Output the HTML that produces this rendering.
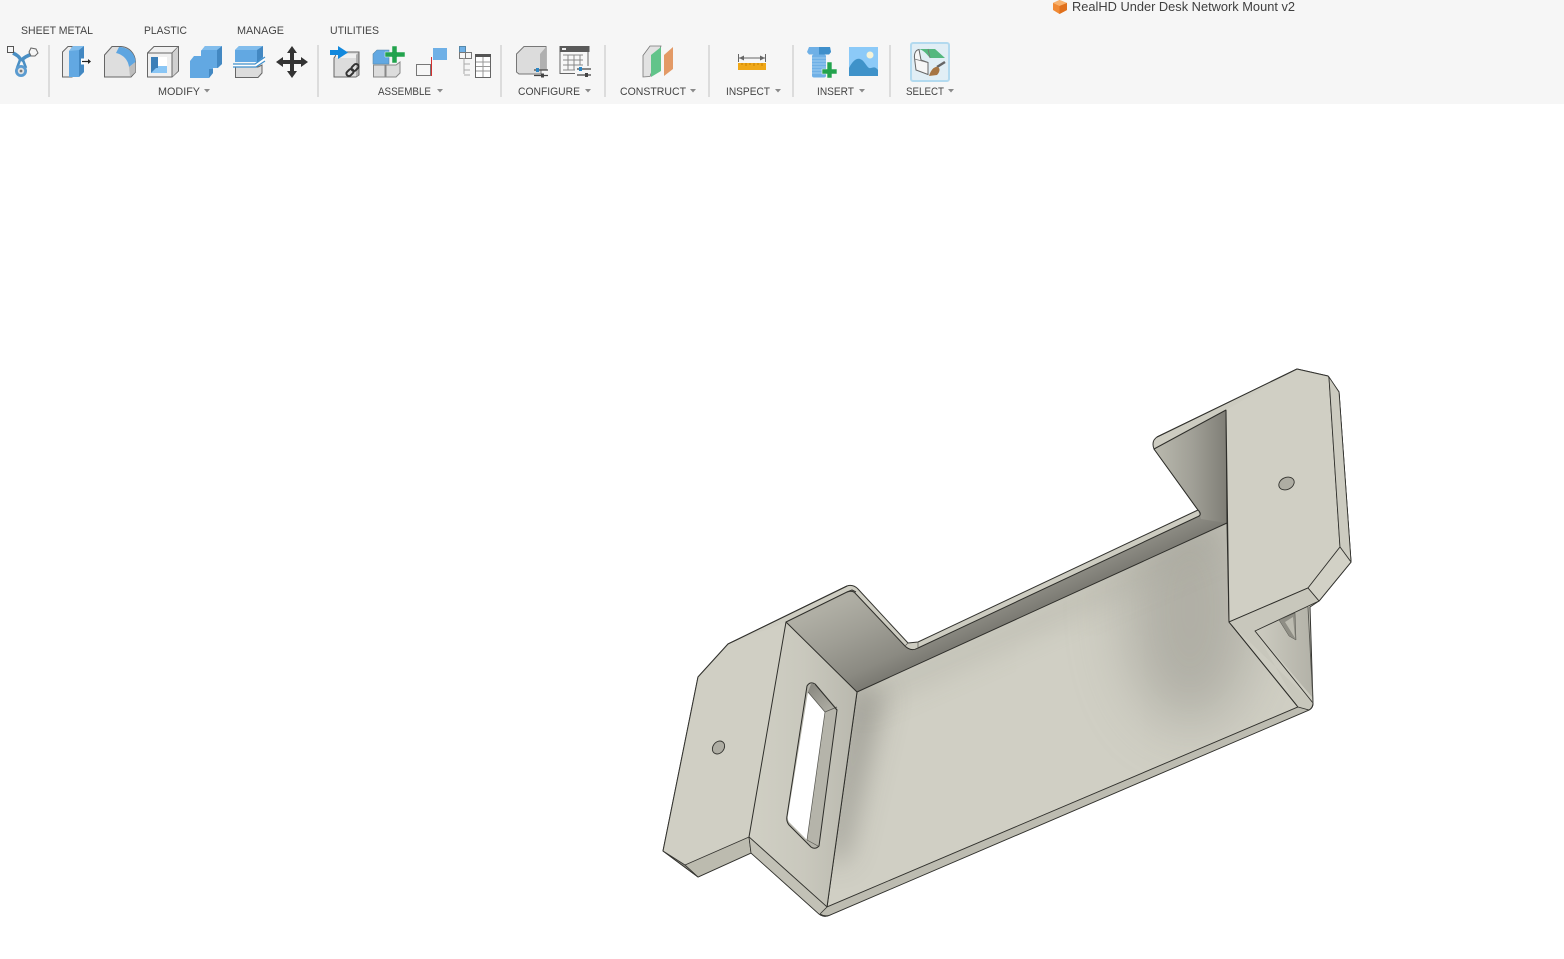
<!DOCTYPE html>
<html><head><meta charset="utf-8"><title>RealHD Under Desk Network Mount v2</title>
<style>html,body{margin:0;padding:0;background:#fff;width:1564px;height:959px;overflow:hidden}svg{display:block}
text{font-family:"Liberation Sans",Arial,sans-serif;font-size:11px;fill:#444}</style></head>
<body>
<svg width="1564" height="959" viewBox="0 0 1564 959" xmlns="http://www.w3.org/2000/svg">
<defs>
<linearGradient id="wall" gradientUnits="userSpaceOnUse" x1="857" y1="692" x2="820" y2="610">
<stop offset="0" stop-color="#7a7972"/><stop offset=".2" stop-color="#8b8a82"/><stop offset=".6" stop-color="#9f9e95"/><stop offset="1" stop-color="#b0afa5"/>
</linearGradient>
<linearGradient id="wallR" gradientUnits="userSpaceOnUse" x1="1150" y1="0" x2="1228" y2="0">
<stop offset="0" stop-color="#bdbcb1"/><stop offset=".55" stop-color="#a09f96"/><stop offset="1" stop-color="#7e7d75"/>
</linearGradient>
<linearGradient id="face" gradientUnits="userSpaceOnUse" x1="750" y1="0" x2="858" y2="0">
<stop offset="0" stop-color="#d0cfc4"/><stop offset=".5" stop-color="#c9c8bd"/><stop offset="1" stop-color="#b9b8ae"/>
</linearGradient>
<linearGradient id="rear" gradientUnits="userSpaceOnUse" x1="1250" y1="0" x2="1312" y2="0">
<stop offset="0" stop-color="#cfcec3"/><stop offset="1" stop-color="#b3b2a8"/>
</linearGradient>
<linearGradient id="slottop" gradientUnits="userSpaceOnUse" x1="808" y1="688" x2="832" y2="720">
<stop offset="0" stop-color="#8a8981"/><stop offset="1" stop-color="#b8b7ad"/>
</linearGradient>
<filter id="b14" filterUnits="userSpaceOnUse" x="600" y="350" width="900" height="650"><feGaussianBlur stdDeviation="14"/></filter>
<filter id="b30" filterUnits="userSpaceOnUse" x="600" y="350" width="900" height="650"><feGaussianBlur stdDeviation="30"/></filter>
<clipPath id="floorclip"><path d="M857 692L1227 523L1229 622L1298 707L827 907Z"/></clipPath>
</defs>

<rect width="1564" height="104" fill="#f6f6f6"/>

<!-- title -->
<path d="M1059.500 0L1067 3V10L1059.500 14L1053 10V3Z" fill="#f08a35"/><path d="M1053 3L1059.500 6L1067 3L1059.500 0Z" fill="#f8b26e"/><path d="M1059.500 6V14L1067 10V3Z" fill="#e0701c"/>
<text x="1072" y="11" textLength="223" lengthAdjust="spacingAndGlyphs" style="font-size:12.500px;fill:#3f3f3f">RealHD Under Desk Network Mount v2</text>

<!-- tabs -->
<text x="21" y="34" textLength="72" lengthAdjust="spacingAndGlyphs">SHEET METAL</text>
<text x="144" y="34" textLength="43" lengthAdjust="spacingAndGlyphs">PLASTIC</text>
<text x="237" y="34" textLength="47" lengthAdjust="spacingAndGlyphs">MANAGE</text>
<text x="330" y="34" textLength="49" lengthAdjust="spacingAndGlyphs">UTILITIES</text>

<!-- group labels -->
<text x="158" y="95" textLength="42" lengthAdjust="spacingAndGlyphs">MODIFY</text>
<text x="378" y="95" textLength="53" lengthAdjust="spacingAndGlyphs">ASSEMBLE</text>
<text x="518" y="95" textLength="62" lengthAdjust="spacingAndGlyphs">CONFIGURE</text>
<text x="620" y="95" textLength="66" lengthAdjust="spacingAndGlyphs">CONSTRUCT</text>
<text x="726" y="95" textLength="44" lengthAdjust="spacingAndGlyphs">INSPECT</text>
<text x="817" y="95" textLength="37" lengthAdjust="spacingAndGlyphs">INSERT</text>
<text x="906" y="95" textLength="38" lengthAdjust="spacingAndGlyphs">SELECT</text>
<g fill="#8a8a8a">
<path d="M204 89h6l-3 3.500z"/><path d="M437 89h6l-3 3.500z"/><path d="M585 89h6l-3 3.500z"/><path d="M690 89h6l-3 3.500z"/><path d="M775 89h6l-3 3.500z"/><path d="M859 89h6l-3 3.500z"/><path d="M948 89h6l-3 3.500z"/>
</g>

<!-- separators -->
<g fill="#dcdcdc">
<rect x="48" y="45" width="2" height="52"/><rect x="317" y="45" width="2" height="52"/><rect x="500" y="45" width="2" height="52"/><rect x="604" y="45" width="2" height="52"/><rect x="708" y="45" width="2" height="52"/><rect x="792" y="45" width="2" height="52"/><rect x="889" y="45" width="2" height="52"/>
</g>

<!-- Sheet metal icon -->
<g>
<path d="M13 53C17 55 20 57 21 61M33 54C28 55 23 58 21 61" fill="none" stroke="#4a8fc4" stroke-width="3.500"/>
<path d="M20 60L17 68M23 60L26 68" fill="none" stroke="#4a8fc4" stroke-width="2.500"/>
<circle cx="21" cy="71" r="6" fill="#5a9bd0"/><circle cx="21" cy="71" r="3.200" fill="#e2e2e2"/><circle cx="21" cy="71" r="1.400" fill="#777"/>
<rect x="7.500" y="46.500" width="6" height="6" fill="#f6f6f6" stroke="#555"/>
<path d="M31 48L36 49L38 53L35 56L31 56L29 52Z" fill="#f6f6f6" stroke="#666"/>
</g>

<!-- Press pull -->
<path d="M62.500 77V52L68 46.500H72V77Z" fill="#ececec" stroke="#666"/>
<path d="M69 51L73 46H84V72L79 77H69Z" fill="#62a8e2"/><path d="M79 50V77L84 72V46Z" fill="#4388c2"/><path d="M69 51L73 46H84L79 50Z" fill="#82bdec"/>
<rect x="81" y="58.500" width="4" height="6" fill="#fff"/>
<path d="M82 61.500H89" stroke="#222" stroke-width="1.200"/><path d="M88 59L91 61.500L88 64Z" fill="#222"/>

<!-- Fillet -->
<path d="M104.500 77V55L112 46.500H121C129 47 135 53 135.500 62V72L131 77Z" fill="#dedede" stroke="#666"/>
<path d="M119 47C128 47 135 53 135.500 62L129 67C128 60 124 55 116 53Z" fill="#5ea5e0"/>
<path d="M129 67L135.500 62V72L130 77Z" fill="#bdbdbd"/>

<!-- Shell -->
<path d="M147.500 77V53L154 46.500H178.500V71L172 77Z" fill="#f0f0f0" stroke="#666"/>
<path d="M147.500 53H172V77M172 53L178.500 46.500" fill="none" stroke="#666"/>
<path d="M172.500 53L178 47V71L172.500 76.500Z" fill="#d0d0d0"/>
<rect x="151" y="57" width="16" height="16" fill="#fff"/>
<path d="M151 58H158V68H167V73H151Z" fill="#3b7fb8"/><path d="M158 66H167V73H151Z" fill="#8ac6f5"/><rect x="151" y="57" width="7" height="11" fill="#3b7fb8"/>

<!-- Combine -->
<path d="M190 61L194 56H201V51L205 46H222V64L218 68H213V73L209 78H190Z" fill="#62a8e2"/>
<path d="M217 50L222 46V64L217 68ZM209 69H213V73L209 78Z" fill="#4388c2"/>
<path d="M201 51L205 46H222L217 50H201Z" fill="#82bdec"/>

<!-- Split -->
<path d="M235 50L239 46H263V58L259 62H235Z" fill="#62a8e2"/><path d="M235 50L239 46H263L258 50H235Z" fill="#82bdec"/><path d="M257 50L263 46V57L257 62Z" fill="#4388c2"/>
<path d="M235.500 67H258L262 65V73L258 77.500H235.500Z" fill="#dcdcdc" stroke="#666"/>
<path d="M233 65.500H255C258 65.500 261 61 265 59" fill="none" stroke="#fff" stroke-width="3"/>
<path d="M233 64H255L265 57M233 67H256L265 61" fill="none" stroke="#3f8fcb" stroke-width="1.200"/>

<!-- Move -->
<path d="M292 46L297 53H294V60H301V57L308 62L301 67V64H294V71H297L292 78L287 71H290V64H283V67L276 62L283 57V60H290V53H287Z" fill="#333"/>

<!-- Joint origin -->
<path d="M334 58L338 52H359V75L356 77H334Z" fill="#dcdcdc" stroke="#666"/>
<path d="M336 54H356V58H336Z" fill="#efefef"/><path d="M356 55L358.500 52.500V75L356 76.500Z" fill="#b0b0b0"/>
<rect x="330" y="50" width="10" height="5" fill="#1188dd"/><path d="M338 46L348 52.500L338 59Z" fill="#1188dd"/>
<g fill="none" stroke="#333" stroke-width="2"><rect x="346" y="70" width="8" height="5" rx="2.500" transform="rotate(-45 350 72.500)"/><rect x="351" y="65" width="8" height="5" rx="2.500" transform="rotate(-45 355 67.500)"/></g>

<!-- New component -->
<path d="M373 54L377 50H389V64H373Z" fill="#62a8e2" stroke="#5588aa" stroke-width=".6"/>
<path d="M373.500 65H385V77H373.500Z" fill="#dcdcdc" stroke="#888"/><path d="M386 65H396L400 62V73L396 77H386Z" fill="#dcdcdc" stroke="#888"/>
<path d="M392 46H397V52H405V57H397V63H392V57H385V52H392Z" fill="#22a34d" stroke="#f6f6f6" stroke-width=".5"/>

<!-- Align -->
<rect x="416.500" y="64.500" width="14" height="11" fill="none" stroke="#777"/><rect x="433" y="48" width="14" height="12" fill="#6fb0e6"/>
<path d="M431.500 57V76" stroke="#d63030" stroke-width="1"/>

<!-- Tree / table -->
<rect x="459.500" y="46.500" width="6" height="6" fill="#6fb0e6" stroke="#5588aa"/><rect x="459.500" y="52.500" width="6" height="6" fill="#f6f6f6" stroke="#777"/><rect x="465.500" y="52.500" width="6" height="6" fill="#f6f6f6" stroke="#777"/>
<path d="M464 58V74M464 64H470M464 70H470M464 75H470" fill="none" stroke="#aaa"/>
<rect x="475.500" y="55.500" width="15" height="22" fill="#fff" stroke="#666"/><rect x="475" y="54" width="16" height="3" fill="#555"/>
<path d="M476 62H490M476 66.500H490M476 71H490M483 57V77" stroke="#999" fill="none"/>

<!-- Configure -->
<path d="M516.500 72V54L524 46.500H546V70H541V74H519Z" fill="#dcdcdc" stroke="#777"/>
<path d="M540 54L546 47V70H540Z" fill="#b0b0b0"/>
<path d="M534 70H548M534 75.500H548" stroke="#444" stroke-width="1.300"/><rect x="536" y="68" width="3" height="4" fill="#2b86c5"/><rect x="541" y="73.500" width="3" height="4" fill="#444"/>

<!-- Config table -->
<rect x="560" y="46.500" width="28" height="27" fill="#f7f7f7" stroke="#666"/><rect x="559.500" y="46" width="30" height="6" fill="#5a5a5a"/><rect x="562" y="48" width="4" height="2" fill="#eee"/>
<path d="M563 55H583M563 60H583M563 65H583M563 70H578M568 55V70M574 55V70M580 55V65" stroke="#888" fill="none"/>
<rect x="575" y="66" width="16" height="12" fill="#f6f6f6"/>
<path d="M577 69H591M577 75H591" stroke="#444" stroke-width="1.300"/><rect x="579" y="67" width="3" height="4" fill="#2b86c5"/><rect x="585" y="73" width="3" height="4" fill="#444"/>

<!-- Construct -->
<path d="M643 55.500V77L650 76.500L661 46H650Z" fill="#e2e2e2" stroke="#777" stroke-width=".8"/>
<path d="M651 55L661 47V71L651 77Z" fill="#62c48a"/>
<path d="M664 55L673 47V69L664 76Z" fill="#e39a66"/>

<!-- Inspect -->
<path d="M738.500 54V62M765.500 54V62M739 58H765" stroke="#666" fill="none"/><path d="M739 58L744 55.500V60.500ZM765 58L760 55.500V60.500Z" fill="#666"/>
<rect x="738" y="63" width="28" height="7" fill="#f0a818"/>
<path d="M742 63V65M746 63V66M750 63V65M754 63V66M758 63V65M762 63V66" stroke="#c77f00"/>

<!-- Insert bolt -->
<path d="M807 52L809 47H830L831 52L829 54.500H809Z" fill="#6fb0e6"/><path d="M819 47H830L831 52L829 54.500H819Z" fill="#3f8fcb"/>
<rect x="812" y="54.500" width="14" height="23" rx="2" fill="#6fb0e6"/>
<path d="M812 58H826M812 61H826M812 64H826M812 67H826M812 70H826M812 73H826" stroke="#9ccbf0"/>
<path d="M827 62H832V69H837V74H832V78H827V74H822V69H827Z" fill="#22a34d" stroke="#f6f6f6" stroke-width=".6"/>

<!-- Insert image -->
<rect x="849" y="47" width="29" height="29" fill="#8ccaf8"/>
<path d="M849 76V68C853 60 857 58 860 59C864 60 866 66 869 68C872 69 874 65 878 70V76Z" fill="#3f92c9"/>
<circle cx="870" cy="55" r="3.500" fill="#f5f3d8"/>

<!-- Select -->
<rect x="911" y="43" width="38" height="38" rx="2" fill="#e1eef5" stroke="#b3daef" stroke-width="2"/>
<path d="M914.500 58C914 53 916 50 919 49.500L921 60L928 62.500V74.500L916 70Z" fill="#f6f6f6" stroke="#666"/>
<path d="M919 49H935L945 58H930C926 53 923 50 919 49Z" fill="#55b87f"/>
<path d="M928 49L930 58M914.500 59L927.500 62.500" stroke="#777" fill="none" stroke-width=".8"/>
<path d="M937 67L945 62" stroke="#666" stroke-width="2.500"/><path d="M929 76C931 69 935 66 938 67C941 69 939 73 937 75Z" fill="#a67543"/>

<!-- ===== 3D MODEL ===== -->
<g stroke-linejoin="round">
<!-- silhouette base -->
<path d="M663 851L698 677L728 644L847 586Q853 584 858 589L908 643L918 642L1198 510L1154 449Q1151 441 1157 437L1297 369L1328 376L1339 392L1351 562L1319 601L1310 607L1313 703Q1313 708 1309 710L830 915Q824 918 819 914L751 853L698 877Z" fill="#cdccc1" stroke="#33332f" stroke-width="1"/>

<!-- wall (left flange + long band) -->
<path d="M786 622L847 592Q852 590 855 593L905 646Q911 652 918 648L1197 517Q1203 515 1198 510L1154 449L1226 410L1227 523L857 692Z" fill="url(#wall)"/>
<path d="M1154 449L1226 410L1227 523L1201 519L1198 510Z" fill="url(#wallR)"/>
<path d="M786 622L847 592Q852 590 855 593L905 646Q911 652 918 648L1197 517Q1203 515 1198 510L1154 449L1226 410L1227 523" fill="none" stroke="#2e2e2a" stroke-width="1"/>
<path d="M908 643L905 646M918 642L918 648" fill="none" stroke="#55554f" stroke-width=".7"/>

<!-- floor -->
<path d="M857 692L1227 523L1229 622L1298 707L827 907Z" fill="#d0cfc4"/>
<g clip-path="url(#floorclip)">
<path d="M850 680L885 690L845 860L825 860Z" fill="#8f8e86" opacity=".7" filter="url(#b14)"/>
<ellipse cx="1190" cy="610" rx="62" ry="115" fill="#8f8e86" opacity=".5" filter="url(#b30)"/>
<path d="M857 692L1227 523L1227 545L857 710Z" fill="#a5a49a" opacity=".45" filter="url(#b14)"/>
</g>
<path d="M857 692L1227 523L1229 622L1298 707L827 907Z" fill="none" stroke="#2e2e2a" stroke-width="1"/>

<!-- left outer tab -->
<path d="M663 851L698 677L728 644L786 622L749 837L685 865Z" fill="#d0cfc4"/>
<path d="M698 677L728 644L847 586" fill="none" stroke="#33332f"/>
<path d="M663 851L698 677" fill="none" stroke="#33332f"/>
<!-- face with slot -->
<path d="M786 622L857 692L827 907L749 837Z" fill="url(#face)" stroke="#2e2e2a" stroke-width="1"/>
<!-- slot -->
<path d="M807 686Q810 681 815 684L837 710L819 846Q815 850 811 847L789 825Q786 821 787 816Z" fill="#b5b4aa" stroke="#2e2e2a" stroke-width="1"/>
<path d="M808 692L811 684L815 684L837 708L825 712Z" fill="url(#slottop)"/>
<path d="M808 692L825 712L807 840L789 822Q787 819 788 815Z" fill="#fff"/>
<path d="M808 692L825 712L807 840" fill="none" stroke="#55554f" stroke-width=".7"/>
<path d="M825 712L837 707M807 840L818 846" fill="none" stroke="#55554f" stroke-width=".7"/>
<path d="M815 684L837 710" fill="none" stroke="#2e2e2a"/>
<!-- screw hole -->
<ellipse cx="718.500" cy="747.500" rx="5.500" ry="7" transform="rotate(38 718.500 747.500)" fill="#aeada3" stroke="#33332f" stroke-width=".9"/>
<!-- lower edges -->
<path d="M685 865L749 837L751 853L698 877Z" fill="#bcbbaf" stroke="#33332f" stroke-width=".8"/>
<path d="M663 851L685 865L698 877Z" fill="#8c8b83" stroke="#33332f" stroke-width=".8"/>
<path d="M749 837L827 907L830 915Q824 918 819 914L751 853Z" fill="#c2c1b6" stroke="#33332f" stroke-width=".8"/>
<path d="M827 907L1298 707L1313 703Q1313 708 1309 710L830 915Q825 917 820 914Z" fill="#bdbcb1" stroke="#33332f" stroke-width=".8"/>
<path d="M847 592L852 590L856 592" fill="none" stroke="#33332f"/>

<!-- right tab -->
<path d="M1226 410L1297 369L1328 376L1340 547L1308 588L1229 622Z" fill="#d0cfc4"/>
<path d="M1157 437L1297 369L1328 376L1339 392L1351 562L1319 601" fill="none" stroke="#33332f"/>
<path d="M1226 410L1229 622L1308 588L1340 547L1329 377" fill="none" stroke="#2e2e2a"/>
<path d="M1329 377L1339 392L1351 562L1340 547Z" fill="#cccbc0" stroke="#33332f" stroke-width=".8"/>
<path d="M1308 588L1340 547L1351 562L1319 601Z" fill="#d2d1c6" stroke="#33332f" stroke-width=".8"/>
<path d="M1229 622L1308 588L1319 601L1255 630L1298 707L1309 710L1313 703Z" fill="#c8c7bc"/>
<path d="M1255 630L1308 606L1312 697Z" fill="url(#rear)"/>
<path d="M1229 622L1308 588L1319 601L1255 631L1313 703Q1313 708 1309 710L1298 707L1229 622" fill="none" stroke="#2e2e2a" stroke-width=".9"/>
<path d="M1308 607L1313 703" fill="none" stroke="#55554f" stroke-width=".9"/>
<path d="M1279 620L1295 613L1296 640L1289 636Z" fill="#8f8e85" stroke="#55554f" stroke-width=".5"/>
<path d="M1285 622L1293 617L1295 638Z" fill="#bdbcb1"/>
<ellipse cx="1286.500" cy="483.500" rx="8" ry="6" transform="rotate(-25 1286.500 483.500)" fill="#aeada3" stroke="#33332f" stroke-width=".9"/>
</g>
</svg>
</body></html>
